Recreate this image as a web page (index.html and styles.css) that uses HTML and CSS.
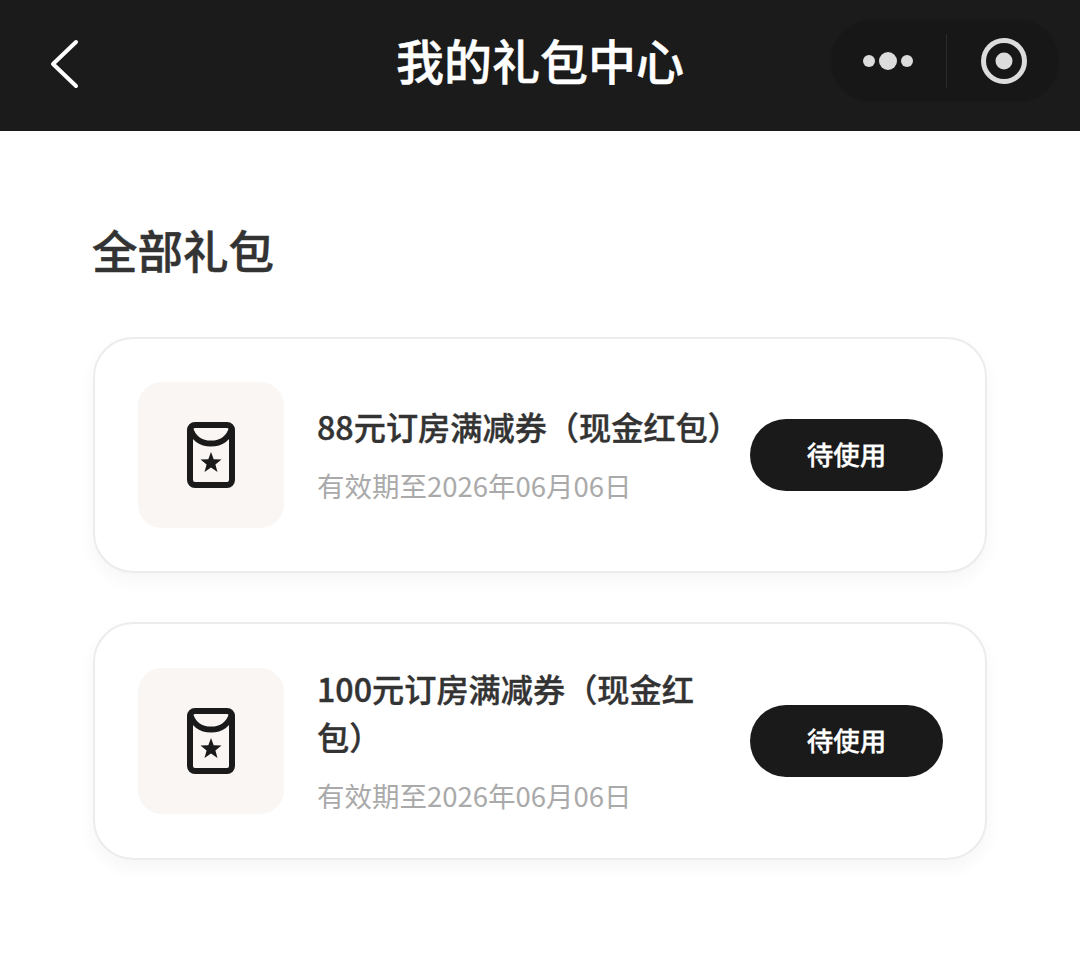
FILE: index.html
```html
<!DOCTYPE html>
<html lang="zh-CN">

<head>
    <meta charset="utf-8" />
    <title>我的礼包中心</title>
    <link rel="stylesheet" href="styles.css">
</head>

<body>
    <div class="navbar">
        <a class="back" href="#">
            <svg width="34" height="52" viewBox="0 0 34 52">
                <path d="M29 4 L6 26 L29 48" fill="none" stroke="#fff" stroke-width="4" stroke-linecap="round" stroke-linejoin="round" />
            </svg>
        </a>
        <h1 class="navbar-title">我的礼包中心</h1>
        <div class="capsule">
            <div class="capsule-dots">
                <span class="dot"></span>
                <span class="dot dot-big"></span>
                <span class="dot"></span>
            </div>
            <span class="capsule-line"></span>
            <svg class="capsule-target" width="48" height="48" viewBox="0 0 48 48">
                <circle cx="24" cy="24" r="20.5" fill="none" stroke="#dcdcdc" stroke-width="5" />
                <circle cx="24" cy="24" r="8.5" fill="#dcdcdc" />
            </svg>
        </div>
    </div>

    <div class="main">
        <h2 class="section-title">全部礼包</h2>

        <div class="card">
            <div class="card-icon">
                <svg width="48" height="66" viewBox="0 0 48 66">
                    <rect x="3" y="3" width="42" height="60" rx="5" fill="none" stroke="#1a1a1a" stroke-width="6" />
                    <path d="M3 6 C6 16 14 21.5 24 21.5 C34 21.5 42 16 45 6" fill="none" stroke="#1a1a1a" stroke-width="6" />
                    <polygon points="24,30 26.7,37.3 34.5,37.6 28.4,42.4 30.5,49.9 24,45.6 17.5,49.9 19.6,42.4 13.5,37.6 21.3,37.3" fill="#1a1a1a" />
                </svg>
            </div>
            <div class="card-text">
                <div class="card-name">88元订房满减券（现金红包）</div>
                <div class="card-date">有效期至2026年06月06日</div>
            </div>
            <a class="card-btn" href="#">待使用</a>
        </div>

        <div class="card">
            <div class="card-icon">
                <svg width="48" height="66" viewBox="0 0 48 66">
                    <rect x="3" y="3" width="42" height="60" rx="5" fill="none" stroke="#1a1a1a" stroke-width="6" />
                    <path d="M3 6 C6 16 14 21.5 24 21.5 C34 21.5 42 16 45 6" fill="none" stroke="#1a1a1a" stroke-width="6" />
                    <polygon points="24,30 26.7,37.3 34.5,37.6 28.4,42.4 30.5,49.9 24,45.6 17.5,49.9 19.6,42.4 13.5,37.6 21.3,37.3" fill="#1a1a1a" />
                </svg>
            </div>
            <div class="card-text">
                <div class="card-name">100元订房满减券（现金红包）</div>
                <div class="card-date">有效期至2026年06月06日</div>
            </div>
            <a class="card-btn" href="#">待使用</a>
        </div>
    </div>
</body>

</html>
```

FILE: styles.css
```css
* {
    margin: 0;
    padding: 0;
    box-sizing: border-box;
}

body {
    background-color: #fff;
    font-family: "Noto Sans CJK SC", "Noto Sans", sans-serif;
    color: #333;
}

.navbar {
    display: grid;
    grid-template-columns: 1fr auto 1fr;
    align-items: center;
    height: 131px;
    padding: 0 20px 9px;
    background-color: #1b1b1b;
}

.back {
    display: block;
    width: 34px;
    height: 52px;
    margin: 6px 0 0 27px;
}

.navbar-title {
    margin-bottom: 4px;
    font-size: 48px;
    font-weight: 500;
    line-height: 60px;
    color: #fff;
    -webkit-text-stroke: 0.5px #fff;
}

.capsule {
    display: flex;
    align-items: center;
    justify-self: end;
    width: 230px;
    height: 84px;
    border: 2px solid #191919;
    border-radius: 42px;
    background-color: #171717;
}

.capsule-dots {
    display: flex;
    align-items: center;
    gap: 4px;
    margin-left: 31px;
}

.dot {
    width: 12px;
    height: 12px;
    border-radius: 50%;
    background-color: #dcdcdc;
}

.dot-big {
    width: 18px;
    height: 18px;
}

.capsule-line {
    width: 1px;
    height: 54px;
    margin-left: 33px;
    background-color: #2c2c2c;
}

.capsule-target {
    margin-left: 33px;
}

.main {
    padding: 88px 93px 0;
}

.section-title {
    margin: 0 0 58px -1px;
    font-size: 45.5px;
    font-weight: 500;
    line-height: 60px;
    -webkit-text-stroke: 0.5px #333;
}

.card {
    display: flex;
    align-items: center;
    margin-bottom: 49px;
    padding: 40px 42px 40px 43px;
    border: 2px solid #ececec;
    border-radius: 40px;
    background-color: #fff;
    box-shadow: 0 8px 18px rgba(0, 0, 0, 0.04);
}

.card-icon {
    display: flex;
    flex-shrink: 0;
    align-items: center;
    justify-content: center;
    width: 146px;
    height: 146px;
    margin: 3px 0;
    border-radius: 24px;
    background-color: #f9f6f3;
}

.card-text {
    flex: 1;
    margin: 0 18px 0 33px;
    padding-bottom: 5px;
}

.card-name {
    font-size: 32.2px;
    font-weight: 500;
    line-height: 48px;
    -webkit-text-stroke: 0.4px #333;
}

.card-date {
    margin-top: 17px;
    font-size: 27.5px;
    line-height: 36px;
    color: #aaa;
}

.card-btn {
    flex-shrink: 0;
    width: 193px;
    height: 72px;
    border-radius: 36px;
    background-color: #1a1a1a;
    font-size: 26.5px;
    font-weight: 500;
    line-height: 70px;
    text-align: center;
    text-decoration: none;
    color: #fff;
    -webkit-text-stroke: 0.3px #fff;
}
```
